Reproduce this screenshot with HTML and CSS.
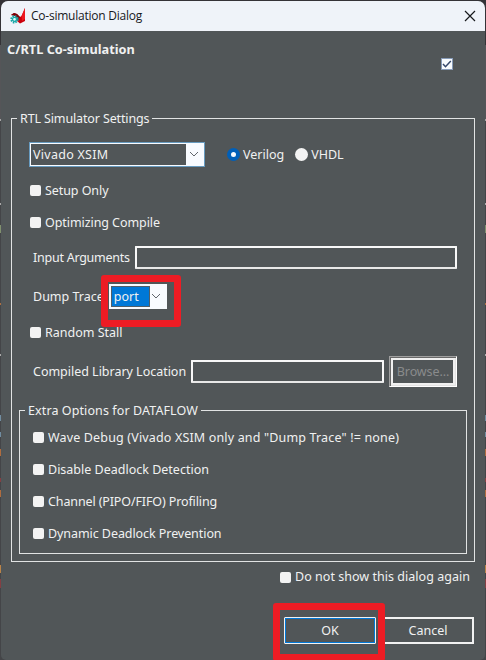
FILE: index.html
```html
<!DOCTYPE html>
<html lang="en">
<head>
<meta charset="utf-8">
<title>Co-simulation Dialog</title>
<link rel="stylesheet" href="styles.css">
</head>
<body>
<main class="dialog">
  <header class="titlebar">
    <svg class="logo" width="17" height="18" viewBox="0 0 17 18">
      <path d="M1 8L4 6L7 7L10 10L11.5 9L15 1V14L13 15L10 16.5L7 14L6 9Z" fill="#c9000b"/>
      <path d="M1 8L4 6L7 7L10 10L8 13L6 9Z" fill="#780006"/>
      <path d="M11.5 9L15 1V12L12 14Z" fill="#ed1720"/>
      <circle cx="4.5" cy="12.3" r="3" fill="none" stroke="#16a5a5" stroke-width="2.4" stroke-dasharray="1.4 0.96"/>
      <circle cx="4.5" cy="12.3" r="2" fill="#e6fcfc" stroke="#18aaa9" stroke-width="1.3"/>
    </svg>
    <h1 class="title">Co-simulation Dialog</h1>
    <svg class="close" width="12" height="12" viewBox="0 0 12 12"><path d="M1 1L11 11M11 1L1 11" stroke="#17191c" stroke-width="1.2"/></svg>
  </header>
  <section class="intro">
    <h2 class="heading">C/RTL Co-simulation</h2>
    <span class="top-check"><svg width="10" height="10" viewBox="0 0 10 10"><path d="M1 5L3.5 7.7L8.8 2" fill="none" stroke="#35486c" stroke-width="1.5"/></svg></span>
  </section>

  <fieldset class="group settings">
    <legend class="legend">RTL Simulator Settings</legend>
    <div class="row simulator-row">
      <div class="combo simulator"><span class="combo-value">Vivado XSIM</span><svg class="chevron" width="10" height="6" viewBox="0 0 10 6"><path d="M1 1L5 5L9 1"/></svg></div>
      <span class="radio selected"></span><span class="text verilog">Verilog</span>
      <span class="radio"></span><span class="text vhdl">VHDL</span>
    </div>
    <label class="row check-row"><span class="check"></span><span class="text setup">Setup Only</span></label>
    <label class="row check-row"><span class="check"></span><span class="text optimize">Optimizing Compile</span></label>
    <div class="row field-row"><span class="text args">Input Arguments</span><span class="input"></span></div>
    <div class="row field-row trace-row"><span class="text trace">Dump Trace</span>
      <div class="combo port"><span class="combo-value">port</span><svg class="chevron" width="10" height="6" viewBox="0 0 10 6"><path d="M1 1L5 5L9 1"/></svg></div>
      <span class="highlight trace-highlight"></span>
    </div>
    <label class="row check-row"><span class="check"></span><span class="text random">Random Stall</span></label>
    <div class="row field-row library-row"><span class="text library">Compiled Library Location</span><span class="input"></span><span class="browse">Browse...</span></div>
    <fieldset class="group extra">
      <legend class="legend">Extra Options for DATAFLOW</legend>
      <label class="row check-row"><span class="check"></span><span class="text wave">Wave Debug (Vivado XSIM only and "Dump Trace" != none)</span></label>
      <label class="row check-row"><span class="check"></span><span class="text disable">Disable Deadlock Detection</span></label>
      <label class="row check-row"><span class="check"></span><span class="text channel">Channel (PIPO/FIFO) Profiling</span></label>
      <label class="row check-row"><span class="check"></span><span class="text dynamic">Dynamic Deadlock Prevention</span></label>
    </fieldset>
  </fieldset>

  <label class="row reminder"><span class="check"></span><span class="again">Do not show this dialog again</span></label>
  <footer class="actions">
    <span class="button ok">OK</span><span class="button cancel">Cancel</span>
    <span class="highlight ok-highlight"></span>
  </footer>
</main>
</body>
</html>
```
FILE: styles.css
```css
* { box-sizing: border-box; }
html { height: 660px; background: #444548; }
body {
  margin: 0;
  width: 486px;
  height: 660px;
  padding: 1px 1px 0;
  overflow: hidden;
  background: linear-gradient(#343337 0 45px, #555558 45px 119px, #a5a5a5 119px 121px, #444548 121px 203px, #aaa 203px 205px, #444548 205px 225px, #80906e 225px 233px, #444548 233px 303px, #ad7042 303px 305px, #444548 305px 354px, #aaa 354px 356px, #444548 356px 415px, #718da1 415px 421px, #444548 421px 432px, #718da1 432px 437px, #444548 437px 449px, #b06c3e 449px 456px, #444548 456px 478px, #843f43 478px 482px, #444548 482px 490px, #b06c3e 490px 497px, #444548 497px 565px, #b98348 565px 573px, #444548 573px 579px, #843f43 579px 588px, #444548 588px);
  color: #f0f1f1;
  font: 12.5px/20px "Noto Sans", "Open Sans", sans-serif;
}
.dialog { width: 484px; height: 659px; background: #515658; border-radius: 7px 7px 5px 5px; overflow: hidden; position: relative; }
.titlebar { height: 30px; display: flex; align-items: center; padding: 0 9px; background: #eff3f9; color: #17191c; }
.logo { margin-right: 4px; }
.title { flex: 1; margin: 0; font: 12px/18px "Open Sans", sans-serif; letter-spacing: -0.23px; }
.intro { height: 78px; padding: 8px 32px 0 6px; display: flex; justify-content: space-between; }
.heading { margin: 0; font: 700 12.75px/20px "Noto Sans", sans-serif; white-space: nowrap; }
.top-check { width: 12px; height: 12px; margin-top: 19px; background: #f7fbff; border: 1px solid #879bb8; display: flex; }
.group { margin: 0; border: 1px solid #e1e3e3; min-width: 0; }
.legend { height: 18px; padding: 1px 3px 0; line-height: 18px; white-space: nowrap; }
.settings { width: 464px; height: 453px; margin-left: 10px; padding: 0 7px; }
.settings > .legend { margin-left: -2px; letter-spacing: -0.13px; }
.row { display: flex; align-items: center; white-space: nowrap; }
.text { padding-top: 2px; }
.simulator-row { height: 38px; padding: 6px 0 0 10px; margin: 5px 0 4px; }
.combo { height: 25px; display: flex; justify-content: space-between; align-items: center; border: 2px solid #f8fbff; background: #f8fbff; padding-right: 4px; }
.combo-value { height: 21px; line-height: 22px; padding-left: 2px; background: #515658; }
.chevron { fill: none; stroke: #62676d; }
.simulator { width: 176px; outline: 1px solid #679bc0; outline-offset: -1px; margin-right: 22px; }
.simulator .combo-value { width: 155px; letter-spacing: 0.27px; }
.radio { width: 13px; height: 13px; border-radius: 50%; background: #f3f3f3; margin-right: 3px; }
.radio.selected { background: #f6fafe; border: 4px solid #005fb8; }
.verilog { margin-right: 11px; }
.check-row { height: 32px; padding-left: 11px; }
.check { flex: none; width: 11px; height: 11px; background: #f3f3f3; border-radius: 2px; margin-right: 4px; }
.setup, .optimize { letter-spacing: -0.07px; }
.field-row { height: 38px; padding: 0 10px 0 14px; }
.field-row .text { flex: none; }
.args { letter-spacing: -0.25px; }
.input { flex: 1; height: 23px; border: 2px solid #f8f8f8; border-bottom-color: #e8e8e8; border-radius: 1px; margin-left: 5px; }
.trace-row { position: relative; height: 40px; }
.port { width: 58px; margin-left: 5px; }
.port .combo-value { width: 39px; padding-left: 3px; background: #0078d7; box-shadow: inset 0 0 0 1px #515f69; }
.highlight { position: absolute; border: 7px solid #ed1c24; border-radius: 3px; }
.trace-highlight { width: 80px; height: 52px; left: 82px; top: -1px; }
.library-row { height: 46px; }
.library { letter-spacing: -0.02px; }
.browse { width: 68px; height: 31px; margin-left: 5px; padding-top: 1px; display: flex; align-items: center; justify-content: center; color: #898b8c; letter-spacing: -0.1px; border: 1px solid #fff; border-top-color: #a0a0a0; border-left-color: #a0a0a0; box-shadow: inset 1px 1px #696969, inset -1px -1px #e3e3e3, inset 0 0 0 3px #f0f0f0; }
.extra { width: 448px; height: 153px; margin-top: 7px; padding: 2px 2px 0; }
.extra > .legend { margin-left: 3px; letter-spacing: 0.1px; }
.wave { letter-spacing: 0.16px; }
.channel { letter-spacing: -0.12px; }
.dynamic { letter-spacing: -0.07px; }
.again { letter-spacing: 0.03px; }
.reminder { height: 30px; padding-left: 279px; }
.actions { height: 67px; padding: 25px 10px 0 283px; display: flex; gap: 6px; }
.button { width: 92px; height: 27px; display: flex; align-items: center; justify-content: center; border: 2px solid #f2f2f2; }
.ok { border-width: 1px; border-radius: 1px; outline: 1px solid #0078d7; outline-offset: -2px; }
.ok-highlight { left: 272px; top: 602px; width: 112px; height: 58px; }
```
